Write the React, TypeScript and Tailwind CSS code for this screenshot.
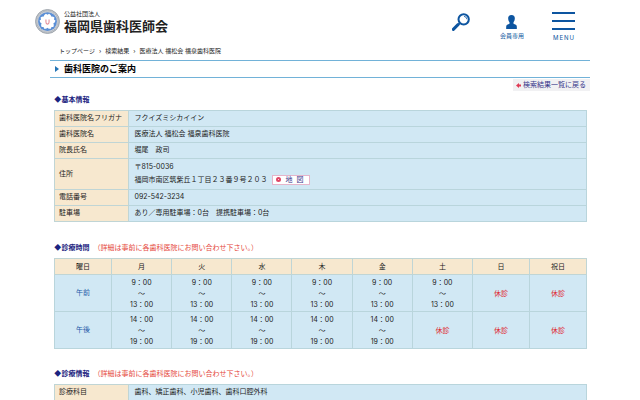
import React from "react";

const days = ["月", "火", "水", "木", "金", "土", "日", "祝日"];

const morning = ["9：00", "13：00"];
const afternoon = ["14：00", "19：00"];

const schedule: { label: string; slots: (string[] | null)[] }[] = [
  { label: "午前", slots: [morning, morning, morning, morning, morning, morning, null, null] },
  { label: "午後", slots: [afternoon, afternoon, afternoon, afternoon, afternoon, null, null, null] },
];

const note = "（詳細は事前に各歯科医院にお問い合わせ下さい。）";

function Emblem() {
  return (
    <svg viewBox="0 0 48 48" className="size-[25px] shrink-0" aria-hidden="true">
      <circle cx="24" cy="24" r="23" fill="#c9cdd3" stroke="#8e969e" strokeWidth="1.5" />
      <circle cx="24" cy="24" r="20.5" fill="none" stroke="#a2a9b2" strokeWidth="2" strokeDasharray="2 2" />
      <circle cx="24" cy="24" r="18" fill="#5b8fd6" />
      {[0, 72, 144, 216, 288].map((angle) => (
        <path
          key={angle}
          d="M24 26 C15 20 15 12 21 9 L24 11 L27 9 C33 12 33 20 24 26Z"
          fill="#fff"
          transform={`rotate(${angle} 24 24)`}
        />
      ))}
      <path d="M21 20v5q0 4 3 4t3-4v-5" fill="none" stroke="#e58a94" strokeWidth="2" />
    </svg>
  );
}

function SearchIcon() {
  return (
    <svg viewBox="0 0 54 54" className="size-[18px]" fill="none" stroke="#0d55a0" aria-hidden="true">
      <circle cx="35" cy="19" r="15.5" strokeWidth="6" />
      <path d="M36 10q8 1 9 9" strokeWidth="2.5" />
      <path d="M23 31l-4 4" strokeWidth="5" />
      <path d="M18 35L4 49" strokeWidth="9" strokeLinecap="round" />
    </svg>
  );
}

function MemberIcon() {
  return (
    <svg viewBox="0 0 32 42" className="h-[14px] w-[11px]" fill="#0d55a0" aria-hidden="true">
      <path d="M16 0C9 0 6 4 6 10c0 6 2 9 4 12v4L3 29c-2 1-3 3-3 6v7h32v-7c0-3-1-5-3-6l-7-3v-4c2-3 4-6 4-12 0-6-3-10-10-10Z" />
    </svg>
  );
}

function Header() {
  return (
    <header className="flex h-[47px] items-start justify-between pl-[35px] pr-[65px]">
      <div className="flex items-start gap-1 pt-[9px]">
        <Emblem />
        <div>
          <p className="text-[6px] leading-[9px]">公益社団法人</p>
          <p className="text-[13px] font-bold leading-4">福岡県歯科医師会</p>
        </div>
      </div>
      <nav className="flex items-start text-[#0d55a0]">
        <button type="button" aria-label="検索" className="mr-[30px] mt-[13px]">
          <SearchIcon />
        </button>
        <a href="#member" className="mr-7 mt-[15px] flex flex-col items-center text-[6px] leading-[8px]">
          <MemberIcon />
          <span className="mt-[3px]">会員専用</span>
        </a>
        <button type="button" className="mt-3 flex w-[23px] flex-col items-center">
          <span className="flex w-full flex-col gap-[6px]">
            <span className="h-[2px] bg-[#0d55a0]" />
            <span className="h-[2px] bg-[#0d55a0]" />
            <span className="h-[2px] bg-[#0d55a0]" />
          </span>
          <span className="mt-1 pl-px text-[6px] leading-[8px] tracking-[1px]">MENU</span>
        </button>
      </nav>
    </header>
  );
}

function SectionTitle({ title, children }: { title: string; children?: React.ReactNode }) {
  return (
    <h2 className="mb-1 flex gap-1 text-[7px] leading-[12px]">
      <span className="font-bold text-[#1b2380]">◆{title}</span>
      {children && <span className="text-[#e5483c]">{children}</span>}
    </h2>
  );
}

function InfoTable({ rows }: { rows: [string, React.ReactNode][] }) {
  return (
    <table className="w-full table-fixed border-collapse border border-[#a9cbd0] text-[7px] leading-[12px]">
      <colgroup>
        <col className="w-[14%]" />
        <col />
      </colgroup>
      <tbody>
        {rows.map(([label, value]) => (
          <tr key={label}>
            <th
              scope="row"
              className="whitespace-nowrap border border-[#c0d5d5] bg-[#f7e8cf] px-1 pb-[2px] pt-px text-left font-normal"
            >
              {label}
            </th>
            <td className="border border-[#b9d5dc] bg-[#d1e8f4] px-[5px] pb-[2px] pt-px">{value}</td>
          </tr>
        ))}
      </tbody>
    </table>
  );
}

function MapButton() {
  return (
    <button
      type="button"
      className="ml-[5px] inline-flex h-[10px] w-[38px] items-center gap-1 border border-[#e5b5ca] bg-white px-[3px] align-middle text-[7px] leading-[8px] text-[#35358a]"
    >
      <span className="size-[5px] rounded-full border-2 border-[#df4665]" />
      <span>地&nbsp;&nbsp;図</span>
    </button>
  );
}

function ScheduleTable() {
  return (
    <table className="w-full table-fixed border-collapse border border-[#a9cbd0] text-center text-[7px]">
      <colgroup>
        <col className="w-[57px]" />
        <col span={6} />
        <col className="w-[57px]" />
        <col className="w-[57px]" />
      </colgroup>
      <thead>
        <tr className="h-4 bg-[#f7e8cf] leading-[12px]">
          {["曜日", ...days].map((day) => (
            <th key={day} scope="col" className="border border-[#c0d5d5] p-0 font-normal">
              {day}
            </th>
          ))}
        </tr>
      </thead>
      <tbody>
        {schedule.map(({ label, slots }) => (
          <tr key={label} className="h-[37px] bg-[#d1e8f4]">
            <th scope="row" className="border border-[#b9d5dc] p-0 font-normal text-[#1f5ba8]">
              {label}
            </th>
            {slots.map((slot, i) => (
              <td key={days[i]} className="border border-[#b9d5dc] p-0 leading-[11px]">
                {slot ? (
                  <>
                    {slot[0]}
                    <br />～<br />
                    {slot[1]}
                  </>
                ) : (
                  <span className="text-[#e0262e]">休診</span>
                )}
              </td>
            ))}
          </tr>
        ))}
      </tbody>
    </table>
  );
}

export default function App() {
  return (
    <div
      lang="ja"
      className="h-screen overflow-hidden bg-white font-['Inter','Noto_Sans_CJK_JP',sans-serif] text-[#222]"
    >
      <Header />
      <main className="mx-[50px]">
        <nav aria-label="パンくず" className="flex gap-1 pl-[9px] text-[6px] leading-[8px]">
          <a href="#top">トップページ</a>
          <span>›</span>
          <a href="#results">検索結果</a>
          <span>›</span>
          <span>医療法人 福松会 福泉歯科医院</span>
        </nav>
        <h1 className="mt-[5px] flex h-[18px] items-center gap-[5px] border-y border-[#72b2d8] pl-[5px] text-[9px] font-bold leading-4 text-black">
          <svg viewBox="0 0 4 6" className="h-[6px] w-1" aria-hidden="true">
            <path d="M0 0L4 3L0 6Z" fill="#2374b5" />
          </svg>
          歯科医院のご案内
        </h1>
        <div className="mt-px flex justify-end">
          <a
            href="#results"
            className="flex h-3 items-center gap-[2px] bg-[#f1f1f3] pl-[3px] pr-1 text-[7px] leading-[10px] text-[#35358a]"
          >
            <svg viewBox="0 0 10 10" className="size-[5px]" aria-hidden="true">
              <path d="M0 5L6 0V3H10V7H6V10Z" fill="#e03a55" />
            </svg>
            検索結果一覧に戻る
          </a>
        </div>
        <div className="ml-1 mr-[3px]">
          <section className="mt-[3px]">
            <SectionTitle title="基本情報" />
            <InfoTable
              rows={[
                ["歯科医院名フリガナ", "フクイズミシカイイン"],
                ["歯科医院名", "医療法人 福松会 福泉歯科医院"],
                ["院長氏名", "堀尾　政司"],
                [
                  "住所",
                  <div className="pb-px leading-[13px]">
                    〒815-0036
                    <div className="flex items-center">
                      福岡市南区筑紫丘１丁目２３番９号２０３
                      <MapButton />
                    </div>
                  </div>,
                ],
                ["電話番号", "092-542-3234"],
                ["駐車場", "あり／専用駐車場：0台　提携駐車場：0台"],
              ]}
            />
          </section>
          <section className="mt-5">
            <SectionTitle title="診療時間">{note}</SectionTitle>
            <ScheduleTable />
          </section>
          <section className="mt-[19px]">
            <SectionTitle title="診療情報">{note}</SectionTitle>
            <InfoTable rows={[["診療科目", "歯科、矯正歯科、小児歯科、歯科口腔外科"]]} />
          </section>
        </div>
      </main>
    </div>
  );
}
